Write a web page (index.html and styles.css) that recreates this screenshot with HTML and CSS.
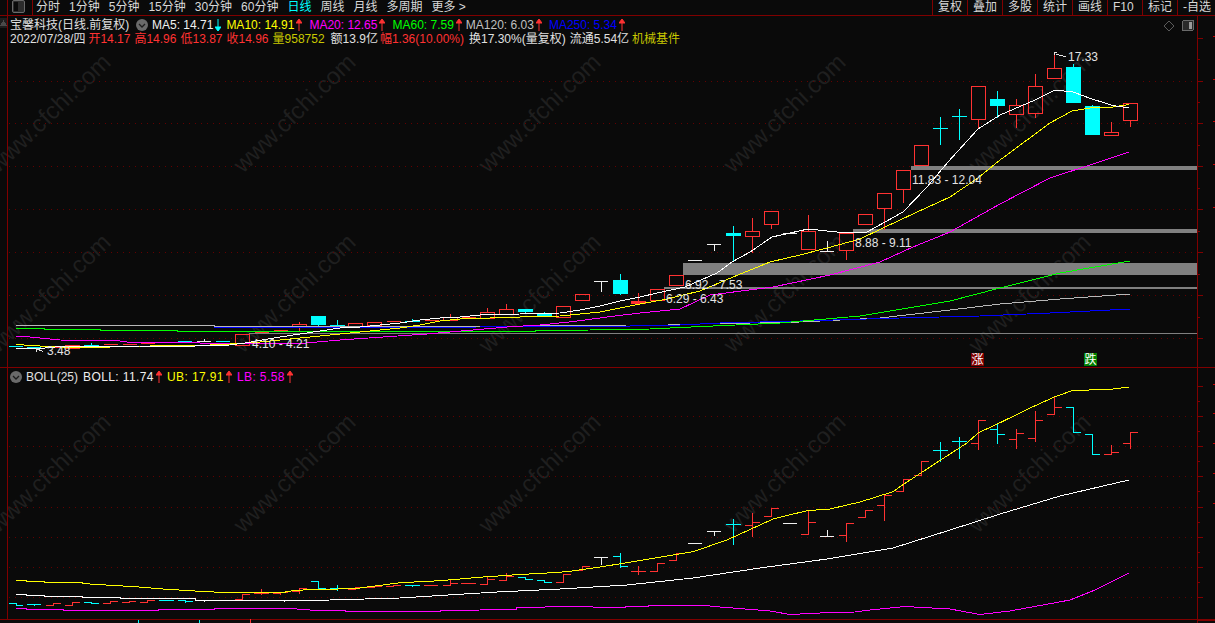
FILE: index.html
```html
<!DOCTYPE html>
<html lang="zh-CN">
<head>
<meta charset="utf-8">
<title>宝馨科技 日线</title>
<link rel="stylesheet" href="styles.css">
</head>
<body>
<div class="app">
  <header class="toolbar">
    <div class="corner"></div>
    <div class="layout-btn"><svg width="13" height="14" viewBox="0 0 13 14"><rect class="lb-frame" x="0.5" y="0.5" width="12" height="12" rx="1.5"/><rect class="lb-fill" x="2" y="2" width="4" height="9"/></svg></div>
    <nav class="periods">
      <span>分时</span><span>1分钟</span><span>5分钟</span><span>15分钟</span><span>30分钟</span><span>60分钟</span><span class="active">日线</span><span>周线</span><span>月线</span><span>多周期</span><span>更多 &gt;</span>
    </nav>
    <nav class="tools">
      <span>复权</span><span>叠加</span><span>多股</span><span>统计</span><span>画线</span><span>F10</span><span>标记</span><span>-自选</span>
    </nav>
  </header>

  <main class="workspace">
    <svg class="watermark" viewBox="0 0 1215 607" aria-hidden="true">
      <g transform="translate(0 -16)">
        <text class="wm" transform="translate(-2 174) rotate(-44)">www.cfchi.com</text>
        <text class="wm" transform="translate(243 174) rotate(-44)">www.cfchi.com</text>
        <text class="wm" transform="translate(488 174) rotate(-44)">www.cfchi.com</text>
        <text class="wm" transform="translate(733 174) rotate(-44)">www.cfchi.com</text>
        <text class="wm" transform="translate(978 174) rotate(-44)">www.cfchi.com</text>
        <text class="wm" transform="translate(-2 354) rotate(-44)">www.cfchi.com</text>
        <text class="wm" transform="translate(243 354) rotate(-44)">www.cfchi.com</text>
        <text class="wm" transform="translate(488 354) rotate(-44)">www.cfchi.com</text>
        <text class="wm" transform="translate(733 354) rotate(-44)">www.cfchi.com</text>
        <text class="wm" transform="translate(978 354) rotate(-44)">www.cfchi.com</text>
        <text class="wm" transform="translate(-2 534) rotate(-44)">www.cfchi.com</text>
        <text class="wm" transform="translate(243 534) rotate(-44)">www.cfchi.com</text>
        <text class="wm" transform="translate(488 534) rotate(-44)">www.cfchi.com</text>
        <text class="wm" transform="translate(733 534) rotate(-44)">www.cfchi.com</text>
        <text class="wm" transform="translate(978 534) rotate(-44)">www.cfchi.com</text>
      </g>
    </svg>

    <div class="panes">
      <section class="pane price-pane">
        <svg class="plot" viewBox="0 16 1215 352">
          <path class="grid" d="M9 81.5H1196M9 123.5H1196M9 166.5H1196M9 209.5H1196M9 252.5H1196M9 295.5H1196M9 338.5H1196"/>
          <path class="frame" d="M7.5 16V368M1197.5 16V368M0 367.5H1215"/>
          <path class="frame" d="M1197 38.5h6M1197 59.5h3M1197 81.5h6M1197 102.5h3M1197 123.5h6M1197 145.5h3M1197 166.5h6M1197 188.5h3M1197 209.5h6M1197 231.5h3M1197 252.5h6M1197 274.5h3M1197 295.5h6M1197 317.5h3M1197 338.5h6"/>
          <path class="cut" d="M1213 36.5h2M1213 79.5h2M1213 121.5h2M1213 164.5h2M1213 207.5h2"/>

          <rect class="band" x="911" y="166" width="286" height="4"/>
          <rect class="band" x="853" y="229" width="344" height="4"/>
          <rect class="band" x="683" y="263" width="514" height="12"/>
          <rect class="band" x="664" y="287" width="533" height="2"/>
          <rect class="band" x="249" y="333" width="948" height="1"/>

          <path class="up" d="M914.5 145.5h14v20h-14zM971.5 86.5h14v33h-14zM978.5 119.5v8M1009.5 105.5h14v9h-14zM1016.5 99v6.5M1016.5 114.5v13M1028.5 86.5h14v27h-14zM1035.5 74v12.5M1035.5 113.5v4M1047.5 68.5h14v10h-14zM1054.5 52v16.5M1104.5 132.5h14v3h-14zM1111.5 122v10.5M1123.5 103.5h14v17h-14zM1130.5 120.5v6M896.5 170.5h14v19h-14zM903.5 189.5v13M877.5 193.5h14v15h-14zM884.5 208.5v21M858.5 214.5h14v10h-14zM839.5 233.5h14v17h-14zM846.5 250.5v9M801.5 231.5h14v18h-14zM808.5 215v16.5M764.5 211.5h14v13h-14zM771.5 224.5v4M745.5 231.5h14v5h-14zM752.5 218v13.5M752.5 236.5v16M669.5 275.5h14v10h-14zM650.5 289.5h14v11h-14zM575.5 294.5h14v6h-14zM556.5 306.5h14v11h-14zM235.5 334.5h14v11h-14zM254.5 332.5h14M273.5 330.5h14M292.5 324.5h14v3h-14zM299.5 322v2.5M299.5 327.5v4M348.5 323.5h14v3h-14zM367.5 322.5h14v3h-14zM386.5 321.5h14M424.5 320.5h14M443.5 317.5h14v3h-14zM450.5 314v3.5M461.5 317.5h14M480.5 312.5h14v6h-14zM487.5 308v4.5M499.5 309.5h14v5h-14zM506.5 304v5.5M46.5 347.5h14M65.5 345.5h14v3h-14zM103.5 344.5h14M122.5 344.5h14M140.5 343.5h14M638.5 293v12M631 302.5h15M631 303.5h15M631 301.5h15"/>
          <path class="dn" d="M990 99h15v7h-15zM1066 67h15v36h-15zM1085 106h15v29h-15zM613 280h15v14h-15zM726 233h15v3h-15zM537 313h15v3h-15zM518 309h15v3h-15zM311 316h15v9h-15zM330 325h15v1h-15zM405 321h15v1h-15z"/>
          <path class="dn-line" d="M997.5 91v27M1073.5 64v3M1092.5 105v1M620.5 274v21M733.5 226v36M544.5 312v5M525.5 309v4M318.5 325v2M337.5 320v6M412.5 319v3M933 128.5h15M940.5 117v28M952 116.5h15M959.5 109v31M9 346.5h14M27 347.5h14M84 345.5h15M91.5 343v3M159 342.5h15M178 341.5h14M216 341.5h14"/>
          <path class="wh-line" d="M688 260.5h14M707 244.5h14M714.5 244.5v6M783 233.5h14M820 251.5h14M827.5 241v11M594 281.5h14M601.5 281.5v10M197 341.5h14M204.5 339v3"/>

          <path class="ln c-gray" d="M16 325.5H214V326.5L340 327L530 326L627 325L668 325L700 324L800 322L880 318L950 310L1000 304L1060 299L1130 294"/>
          <path class="ln c-blue" d="M214 327.5H340L480 327L516 326H630L670 325.5L720 323L800 321L900 318L980 316L1050 313L1130 309"/>
          <path class="ln c-green" d="M16 328.5H44V329.5H100V330.5H177V331.5L340 332L535 331.5V330.5L590 330L650 329L680 327.5L780 323L860 316L950 301L1000 288L1060 273L1130 261"/>
          <path class="ln c-mag" d="M16 336.5H25L60 340L120 341L130 342.5L200 343L300 343.5L340 340L383 337L427 334L473 330L507 327L540 325L573 321.6L607 317L640 313L680 309L710 295L773 287L830 275L880 262L913 247L950 232L1000 204L1050 178L1093 164L1129 152"/>
          <path class="ln c-yel" d="M16 344.5L40 346L60 347H110L150 346L200 345.5L230 344L260 342L300 338L340 334L370 331L400 328L420 325L440 321L460 319L490 318L520 317L560 316L600 312L640 304L667 299L683 295L700 291L733 277L770 262L800 255L827 248L860 239L883 228L915 213L950 197L978 178L1000 160L1050 123L1072 111L1090 108L1113 107L1129 104.5"/>
          <path class="ln c-wht" d="M16 348.5H40L60 346.5L100 347L140 346L195 346L230 345L245 343L262 340L280 337L300 334L320 331L340 328L360 327L380 325L400 323L420 320L440 318L460 317L480 315L520 314L560 313L580 310L600 306L620 301L640 297L657 293L685 287L717 273L732 262L750 252L772 237L790 233L808 229L837 232L867 232L903 212L927 187L948 162L978 129L1000 115L1035 100L1055 90L1073 92L1092 99L1113 105.5L1129 108"/>

          <text class="lbl" x="1068" y="61">17.33</text>
          <text class="lbl" x="912" y="184">11.83 - 12.04</text>
          <text class="lbl" x="855" y="247">8.88 - 9.11</text>
          <text class="lbl" x="685" y="289">6.92 - 7.53</text>
          <text class="lbl" x="666" y="303">6.29 - 6.43</text>
          <text class="lbl" x="252" y="348">4.10 - 4.21</text>
          <text class="lbl" x="47" y="355">3.48</text>
          <path class="pointer" d="M1066 57L1056 54M1054.5 52h2M1054.5 52v3M43 351.5L36 348.5M36 348.5h3M36 348.5v3"/>

          <path class="diamond" d="M1169 21l5 5-5 5-5-5z"/>
          <rect class="sq" x="1182.5" y="20.5" width="11" height="10" rx="1.5"/>
          <rect class="sq-fill" x="1189" y="22" width="3" height="7"/>
          <rect class="scroll-bg" x="0" y="18" width="7" height="10"/>
          <path class="scroll" d="M3.500 20L7 26H0z"/>

          <rect class="tag-up" x="971" y="353" width="13" height="13"/>
          <text class="tag" x="971.5" y="364">涨</text>
          <rect class="tag-dn" x="1084" y="353" width="13" height="13"/>
          <text class="tag" x="1084.5" y="364">跌</text>
        </svg>
        <div class="legend">
          <div class="row">
            <span class="name">宝馨科技(日线.前复权)</span>
            <svg class="chev" viewBox="0 0 12 12"><circle cx="6" cy="6" r="6"/><path d="M3 5l3 3 3-3"/></svg>
            <span class="ma m-s c-w">MA5: 14.71<svg class="arw a-dn" viewBox="0 0 6 12"><path d="M3 0V10M0 8h6L3 12z"/></svg></span>
            <span class="ma c-y">MA10: 14.91<svg class="arw a-up" viewBox="0 0 6 12"><path d="M3 12V2M0 4h6L3 0z"/></svg></span>
            <span class="ma c-m">MA20: 12.65<svg class="arw a-up" viewBox="0 0 6 12"><path d="M3 12V2M0 4h6L3 0z"/></svg></span>
            <span class="ma m-xs c-g">MA60: 7.59<svg class="arw a-up" viewBox="0 0 6 12"><path d="M3 12V2M0 4h6L3 0z"/></svg></span>
            <span class="ma c-s">MA120: 6.03<svg class="arw a-up" viewBox="0 0 6 12"><path d="M3 12V2M0 4h6L3 0z"/></svg></span>
            <span class="ma c-b">MA250: 5.34<svg class="arw a-up" viewBox="0 0 6 12"><path d="M3 12V2M0 4h6L3 0z"/></svg></span>
          </div>
          <div class="row stats">
            <span class="c-l g3">2022/07/28/四</span>
            <span class="c-r g4">开14.17</span>
            <span class="c-r g4">高14.96</span>
            <span class="c-r g4">低13.87</span>
            <span class="c-r g4">收14.96</span>
            <span class="c-o g6">量958752</span>
            <span class="c-l g2">额13.9亿</span>
            <span class="c-r g5">幅1.36(10.00%)</span>
            <span class="c-l g4">换17.30%(量复权)</span>
            <span class="c-l g3">流通5.54亿</span>
            <span class="c-o">机械基件</span>
          </div>
        </div>
      </section>

      <section class="pane boll-pane">
        <svg class="plot" viewBox="0 368 1215 255">
          <path class="grid" d="M9 416.5H1196M9 446.5H1196M9 476.5H1196M9 507.5H1196M9 537.5H1196M9 567.5H1196M9 597.5H1196"/>
          <path class="frame" d="M7.5 368V619M1197.5 368V623M0 619.5H1215"/>
          <path class="frame" d="M1197 386.5h6M1197 401.5h3M1197 416.5h6M1197 431.5h3M1197 446.5h6M1197 461.5h3M1197 476.5h6M1197 491.5h3M1197 507.5h6M1197 522.5h3M1197 537.5h6M1197 552.5h3M1197 567.5h6M1197 582.5h3M1197 597.5h6M1197 620.5h18"/>
          <path class="cut" d="M1213 384.5h2M1213 413.5h2M1213 443.5h2M1213 473.5h2M1213 503.5h2"/>

          <path class="bar-r" d="M914 475.5h7.5V461.5h7M896 491.5h7.5V479.5h7M971 443.5h7.5M978.5 450V420.5h7M1009 439.5h7.5M1016.5 449V429M1016.5 433.5h7M1028 438.5h7.5M1035.5 441.500V411M1035.5 420.5h7M1047 414.5h7.5V397M1054.5 407.500h7M1104 454.5h7.500M1111.5 454.5V445M1111.5 452.5h7M1123 443.5h7.5M1130.5 449V432.5h7M556 582.5h7.5V574.5h7M575 570.5h7.500V566.5h7M631 571.5h15M638.5 566V575M650 571.5h7.5V563.5h7M669 560.5h7.5V553.5h7M745 525.5h7.5M752.5 537V513M752.5 522.500h7M764 516.5h7.5V508.5h7M801 534.5h7.5V511M808.500 522.5h7M839 535.5h7.5M846.5 542V523.5h7M858 517.5h7.5V510.5h7M877 505.5h7.5M884.5 521V495.5h7M499 580.5h7.5M506.5 580V573M506.500 576.5h7M480 584.5h7.5V576M487.5 579.500h7M461 583.5h15M443 585.5h7.5V579M450.5 583.5h7M424 585.500h14M386 586.5h7.5V585.500h7M367 587.5h7.500V586.5h7M348 589.5h7.5V587.5h7M292 591.5h7.5V588.5h7M299.5 591V594M273 593.500h7.5V592.5h7M280.5 593V595M254 593.500h15M261.5 589V595M235 599.5h7.5V594.5h7M140 602.5h7.5V600.5h7M122 602.500h7V601.5h7M103 603.5h7.5V601.5h7M65 605.5h7.5V602.5h7M46 605.500h7.5V603.5h7M250.5 619V623"/>
          <path class="bar-c" d="M933 450.500h15M940.5 442V462M952 441.5h15M959.5 437V459M990 429.5h7.500M997.5 424V444M997.5 434.500h7M1066 407.5h7.5V432.500h7M1085 434.5h7.5V454.500h7M613 556.5h7.5M620.5 553V568M620.5 566.500h7M726 524.500h15M733.5 519V545M537 580.5h7.5V582.500h7M518 577.5h7.5V580M525.500 579.500h7M405 585.5h15M412.5 585V587M330 588.5h15M337.5 585V591M311 581.500h7.5V588.500h7M178 600.5h7.5V603M185.5 601.5h7M159 600.500h15M84 602.500h7.500V603.500h7M27 604.5h14M34.5 604.5V606M9 603.5h7V605.500h7M138.5 620V623M199.500 620V623"/>
          <path class="bar-w" d="M594 557.5h14M601.5 557.5V565M688 543.500h14M707 531.5h14M714.500 531.5V536M783 523.5h14M820 536.500h14M827.5 530V536.500M197 600.5h14M204.5 600.5V602"/>

          <path class="ln c-mag" d="M16 608.5H26V609.500H63V610.500H158V609.500H214V608.500H290L310 610H345V611.500H440V610.500L480 610L516 609.500V608L535 607.5L555 606.5L592 606.5V607L625 607.5V606.5L648 606.300V605H700L720 607L745 609L770 611L790 614.500L820 613L855 612L870 610L905 606.500L950 609L980 614.500L1010 611L1070 600L1095 590L1129 573"/>
          <path class="ln c-wht" d="M16 594.5H26V595.5H44V596.500H82V597H120V598.500H195V600H285V601L330 600L365 599L400 598L440 595.500L497 592L560 589L627 585L693 578L760 568L827 559L893 548L950 530L1000 514L1060 496L1129 480"/>
          <path class="ln c-yel" d="M16 580.5H26V581.500H44V582.500H82V583.500L106 585L139 587L163 589L195 591L214 592H285V591.500L309 589.500H327L360 588L400 582.700L440 580.700L483 577L517 574.700L547 573L567 571.700L600 567L627 562.700L693 551.700L727 540L760 525L773 519L807 510.700L830 509L860 502L893 491.700L900 486.700L933 465L967 443L978 433L1000 422.700L1033 406.700L1055 396.700L1072 390.700L1113 389L1129 387"/>
        </svg>
        <div class="legend">
          <div class="row boll-row">
            <svg class="chev" viewBox="0 0 12 12"><circle cx="6" cy="6" r="6"/><path d="M3 5l3 3 3-3"/></svg>
            <span class="ind">BOLL(25)</span>
            <span class="ma m-s c-w">BOLL: 11.74<svg class="arw a-up" viewBox="0 0 6 12"><path d="M3 12V2M0 4h6L3 0z"/></svg></span>
            <span class="ma m-s c-y">UB: 17.91<svg class="arw a-up" viewBox="0 0 6 12"><path d="M3 12V2M0 4h6L3 0z"/></svg></span>
            <span class="ma m-s c-m">LB: 5.58<svg class="arw a-up" viewBox="0 0 6 12"><path d="M3 12V2M0 4h6L3 0z"/></svg></span>
          </div>
        </div>
      </section>
    </div>
  </main>
</div>
</body>
</html>
```
FILE: styles.css
```css
* { box-sizing: border-box; }
html, body { margin: 0; padding: 0; height: 100%; background: #0a0a0a; overflow: hidden; }
body { font: 12px/14px "Liberation Sans", "Noto Sans CJK SC", sans-serif; color: #ddd; }
.app { width: 1215px; height: 623px; display: flex; flex-direction: column; overflow: hidden; }

/* toolbar */
.toolbar { height: 16px; flex: none; display: flex; border-bottom: 1px solid #800000; line-height: 14px; color: #d8d8d8; }
.corner { width: 8px; border-right: 1px solid #800000; }
.layout-btn { width: 25px; padding: 0 0 0 4px; border-right: 1px solid #800000; }
.lb-frame { fill: #2c2c2c; stroke: #6a6a6a; }
.lb-fill { fill: #0a0a0a; }
.periods { display: flex; gap: 9px; padding-left: 3px; white-space: nowrap; }
.periods .active { color: #00ffff; }
.tools { margin-left: auto; display: flex; width: 283px; }
.tools span { width: 35px; flex: none; padding-left: 5px; border-left: 1px solid #800000; white-space: nowrap; overflow: hidden; }
.tools span:last-child { width: 38px; }

/* panes */
.workspace { flex: 1; min-height: 0; display: grid; }
.watermark { grid-area: 1 / 1; width: 1215px; height: 607px; display: block; }
.wm { font: 24px "Liberation Sans", sans-serif; fill: #1f1f1f; }
.panes { grid-area: 1 / 1; display: flex; flex-direction: column; min-height: 0; }
.pane { display: grid; }
.price-pane { height: 352px; }
.boll-pane { height: 255px; }
.plot { grid-area: 1 / 1; display: block; width: 1215px; height: 100%; shape-rendering: crispEdges; }
.legend { grid-area: 1 / 1; align-self: start; padding: 2px 0 0 10px; position: relative; }
.row { display: flex; align-items: center; height: 14px; white-space: nowrap; }
.name { color: #e0e0e0; width: 126px; }
.chev { width: 12px; height: 12px; margin-right: 4px; flex: none; }
.chev circle { fill: #6a6a6a; }
.chev path { fill: none; stroke: #1c1c1c; stroke-width: 1.3; }
.ma { display: flex; align-items: center; gap: 2px; margin-right: 7px; }
.ma.m-s { margin-right: 5px; }
.ma.m-xs { margin-right: 4px; }
.arw { width: 6px; height: 12px; flex: none; stroke-width: 1; }
.a-up { fill: #ff3232; stroke: #ff3232; }
.a-dn { fill: #00ffff; stroke: #00ffff; }
.g2 { margin-right: 2px; }
.g3 { margin-right: 3px; }
.g4 { margin-right: 4px; }
.g5 { margin-right: 5px; }
.g6 { margin-right: 6px; }
.boll-row .ind { color: #e0e0e0; margin-right: 5px; }
.boll-row .ma { letter-spacing: 0.4px; }
.c-w { color: #f0f0f0; }
.c-y { color: #ffff00; }
.c-m { color: #ff00ff; }
.c-g { color: #00ff00; }
.c-s { color: #c0c0c0; }
.c-b { color: #0000ff; }
.c-l { color: #e0e0e0; }
.c-r { color: #ff3232; }
.c-o { color: #c8c800; }

/* chart drawing */
.grid { stroke: #640000; fill: none; stroke-dasharray: 1 5; }
.frame { stroke: #800000; fill: none; }
.cut { stroke: #c80000; fill: none; }
.band { fill: #808080; }
.up { fill: none; stroke: #ff3232; }
.dn { fill: #00ffff; }
.dn-line { fill: none; stroke: #00ffff; }
.wh-line { fill: none; stroke: #f0f0f0; }
.bar-r { fill: none; stroke: #ff3232; }
.bar-c { fill: none; stroke: #00ffff; }
.bar-w { fill: none; stroke: #f0f0f0; }
.ln { fill: none; stroke-width: 1; }
.c-gray { stroke: #b8b8b8; }
.c-blue { stroke: #0000ff; }
.c-green { stroke: #00ff00; }
.c-mag { stroke: #ff00ff; }
.c-yel { stroke: #ffff00; }
.c-wht { stroke: #ffffff; }
.lbl { font: 12px "Liberation Sans", sans-serif; fill: #e4e4e4; shape-rendering: auto; }
.pointer { fill: none; stroke: #e4e4e4; }
.diamond { fill: none; stroke: #5a5a5a; }
.sq { fill: #2a2a2a; stroke: #6a6a6a; }
.sq-fill { fill: #9a9a9a; }
.scroll-bg { fill: #1e1e1e; }
.scroll { fill: #4a4a4a; }
.tag-up { fill: #800000; }
.tag-dn { fill: #008000; }
.tag { font: 12px "Noto Sans CJK SC", sans-serif; fill: #ffffff; }
```
